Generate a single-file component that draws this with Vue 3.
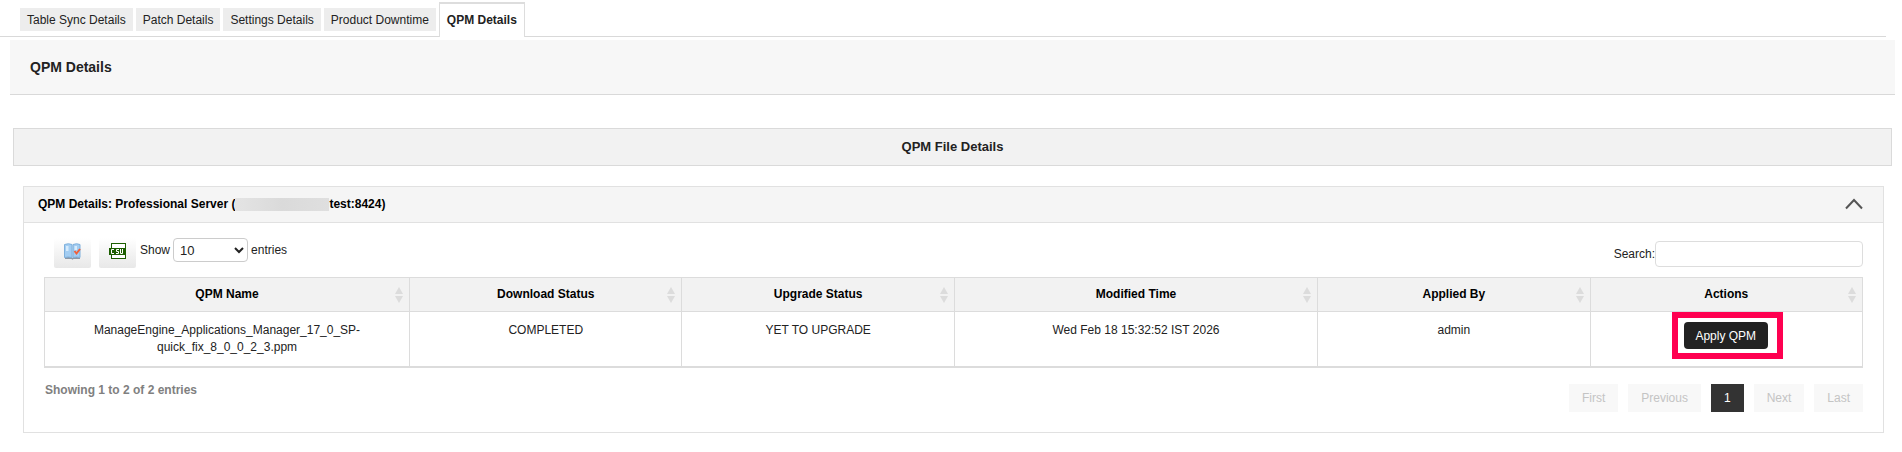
<template>
  <div class="page">
    <nav class="tabs">
      <a
        v-for="tab in tabs"
        :key="tab"
        href="#"
        class="tab"
        :class="{ active: tab === activeTab }"
        @click.prevent="activeTab = tab"
      >{{ tab }}</a>
    </nav>

    <header class="page-header">
      <h1>QPM Details</h1>
    </header>

    <h2 class="section-title">QPM File Details</h2>

    <section class="panel">
      <div class="panel-header">
        <h3>QPM Details: Professional Server (<span class="masked"></span>test:8424)</h3>
        <button class="collapse" aria-label="Collapse" @click="open = !open">
          <svg width="18" height="12" viewBox="0 0 18 12">
            <path d="M1 10.5 L9 2 L17 10.5" fill="none" stroke="#555" stroke-width="2" />
          </svg>
        </button>
      </div>

      <div v-if="open" class="panel-body">
        <div class="toolbar">
          <button class="tool" aria-label="Choose columns">
            <svg width="17" height="17" viewBox="0 0 17 17">
              <path d="M1 14h6.500l1 1 1-1H16v2H9.500l-1 .8-1-.8H1z" fill="#8d99a8" />
              <path d="M.5 1.500Q4.500 0 8 1.500V14.500Q4.500 13.500 .5 14.500z" fill="#a3cdf2" stroke="#7fb0dc" />
              <path d="M9 1.500Q12.500 0 16 1.500V14.500Q12.500 13.500 9 14.500z" fill="#a3cdf2" stroke="#7fb0dc" />
              <path d="M2 3h2.500v5H2zM10.500 3H13v4h-2.500z" fill="#d6ebfc" />
              <path d="M10.500 8l2 2.500L16 6" fill="none" stroke="#f0603a" stroke-width="2" />
            </svg>
          </button>
          <button class="tool" aria-label="Export to CSV">
            <svg width="17" height="17" viewBox="0 0 17 17">
              <rect x="2.500" y="0.500" width="14" height="15" fill="#fff" stroke="#1c5e00" />
              <rect x="0" y="5" width="16" height="7" fill="#1c5e00" />
              <path
                d="M5 6.500H2.500v4H5M10 6.500H7.500v2h2v2H7M11.500 6v4.500h2V6"
                fill="none"
                stroke="#fff"
              />
            </svg>
          </button>
          <label class="length">
            Show
            <select v-model="pageSize">
              <option>10</option>
              <option>25</option>
              <option>50</option>
              <option>100</option>
            </select>
            entries
          </label>
          <label class="search">Search:<input v-model="search" type="text" /></label>
        </div>

        <table>
          <colgroup>
            <col v-for="col in columns" :key="col.label" :style="{ width: col.width }" />
          </colgroup>
          <thead>
            <tr>
              <th v-for="col in columns" :key="col.label">
                {{ col.label }}
                <svg class="sort" width="8" height="16" viewBox="0 0 8 16">
                  <path d="M4 0l4 7H0zM4 16l4-7H0z" fill="#dcdcdc" />
                </svg>
              </th>
            </tr>
          </thead>
          <tbody>
            <tr v-for="row in rows" :key="row.name">
              <td class="name">{{ row.name }}</td>
              <td>{{ row.download }}</td>
              <td>{{ row.upgrade }}</td>
              <td>{{ row.modified }}</td>
              <td>{{ row.appliedBy }}</td>
              <td class="action">
                <span class="highlight"><button class="apply">Apply QPM</button></span>
              </td>
            </tr>
          </tbody>
        </table>

        <div class="footer">
          <p class="info">Showing 1 to 2 of 2 entries</p>
          <div class="pagination">
            <button
              v-for="page in pages"
              :key="page"
              :class="{ current: page === '1' }"
              :disabled="page !== '1'"
            >{{ page }}</button>
          </div>
        </div>
      </div>
    </section>
  </div>
</template>

<script setup>
import { ref } from 'vue'

const tabs = ['Table Sync Details', 'Patch Details', 'Settings Details', 'Product Downtime', 'QPM Details']
const activeTab = ref('QPM Details')
const open = ref(true)
const pageSize = ref('10')
const search = ref('')

const columns = [
  { label: 'QPM Name', width: '20.1%' },
  { label: 'Download Status', width: '15%' },
  { label: 'Upgrade Status', width: '15%' },
  { label: 'Modified Time', width: '20%' },
  { label: 'Applied By', width: '15%' },
  { label: 'Actions', width: '15%' }
]

const rows = [
  {
    name: 'ManageEngine_Applications_Manager_17_0_SP-quick_fix_8_0_0_2_3.ppm',
    download: 'COMPLETED',
    upgrade: 'YET TO UPGRADE',
    modified: 'Wed Feb 18 15:32:52 IST 2026',
    appliedBy: 'admin'
  }
]

const pages = ['First', 'Previous', '1', 'Next', 'Last']
</script>

<style>
body {
  margin: 0;
  background: #fff;
}
</style>

<style scoped>
.page {
  font-family: "Liberation Sans", Arial, sans-serif;
  font-size: 12px;
  line-height: 17px;
  color: #222;
  padding-bottom: 18px;
}

.page * {
  box-sizing: border-box;
}

button,
input,
select {
  font-family: inherit;
  font-size: 12px;
  color: inherit;
}

h1,
h2,
h3,
p {
  margin: 0;
}

.tabs {
  display: flex;
  align-items: flex-end;
  gap: 3px;
  height: 37px;
  margin-right: 16px;
  padding-left: 20px;
  border-bottom: 1px solid #d9d9d9;
}

.tab {
  margin-bottom: 5px;
  padding: 4px 7px 2px;
  background: #ededed;
  color: #222;
  text-decoration: none;
}

.tab.active {
  height: 35px;
  margin-bottom: -1px;
  padding: 8px 7px;
  background: #fff;
  border: 1px solid #ddd;
  border-top-width: 2px;
  border-bottom: 0;
  font-weight: bold;
}

.page-header {
  margin: 3px 7px 0 10px;
  padding: 19px 20px 18px;
  background: #f7f7f7;
  border-bottom: 1px solid #d9d9d9;
}

.page-header h1 {
  font-size: 14px;
  line-height: 17px;
}

.section-title {
  margin: 33px 10px 0 13px;
  padding: 10px;
  background: #f2f2f2;
  border: 1px solid #dadada;
  font-size: 13px;
  line-height: 16px;
  text-align: center;
}

.panel {
  margin: 20px 18px 0 23px;
  border: 1px solid #e1e1e1;
}

.panel-header {
  display: flex;
  align-items: center;
  justify-content: space-between;
  height: 36px;
  padding: 0 20px 0 14px;
  background: #f5f5f5;
  border-bottom: 1px solid #e1e1e1;
}

.panel-header h3 {
  font-size: 12px;
  color: #000;
}

.masked {
  display: inline-block;
  width: 94px;
  height: 13px;
  vertical-align: middle;
  background: linear-gradient(90deg, #e4e4e4, #dadada 50%, #dfdfdf);
}

.collapse {
  display: flex;
  padding: 0 0 2px;
  border: 0;
  background: none;
}

.panel-body {
  padding: 15px 20px 20px;
}

.toolbar {
  display: flex;
  align-items: flex-start;
  height: 39px;
  padding-left: 10px;
}

.tool {
  display: flex;
  justify-content: center;
  width: 37px;
  height: 30px;
  margin-right: 8px;
  padding: 5px 0 0;
  border: 0;
  border-radius: 2px;
  background: linear-gradient(#fff, #e8e8e8);
}

.length {
  display: flex;
  align-items: center;
  gap: 3px;
  margin-left: -4px;
}

.length select {
  width: 75px;
  height: 24px;
  padding: 0 2px;
  border: 1px solid #ccc;
  border-radius: 4px;
  background: #fff;
  font-size: 13px;
}

.search {
  display: flex;
  align-items: center;
  margin: 3px 0 0 auto;
}

.search input {
  width: 208px;
  height: 26px;
  border: 1px solid #ddd;
  border-radius: 4px;
  background: #fff;
}

table {
  width: 100%;
  table-layout: fixed;
  border-collapse: collapse;
  border-bottom: 2px solid #dcdcdc;
}

th,
td {
  border: 1px solid #dcdcdc;
  text-align: center;
}

th {
  position: relative;
  height: 34px;
  padding: 0;
  background: #f2f2f2;
  color: #000;
}

.sort {
  position: absolute;
  top: 9px;
  right: 6px;
}

td {
  height: 55px;
  padding: 10px 40px 9px;
  vertical-align: top;
}

td.action {
  padding: 0 0 0 2px;
}

.highlight {
  display: inline-block;
  border: 6px solid #ff0050;
  padding: 4px 9px 4px 6px;
}

.apply {
  display: block;
  width: 84px;
  height: 27px;
  padding: 0;
  border: 0;
  border-radius: 4px;
  background: #222;
  color: #fff;
}

.footer {
  display: flex;
  align-items: flex-start;
  justify-content: space-between;
  padding-top: 14px;
}

.info {
  padding-left: 1px;
  color: #808080;
  font-weight: bold;
}

.pagination {
  display: flex;
  gap: 10px;
  padding-top: 2px;
}

.pagination button {
  height: 28px;
  padding: 0 13px;
  border: 0;
  background: #f8f8f8;
  color: #c4c4c4;
}

.pagination .current {
  background: #333;
  color: #fff;
}
</style>
